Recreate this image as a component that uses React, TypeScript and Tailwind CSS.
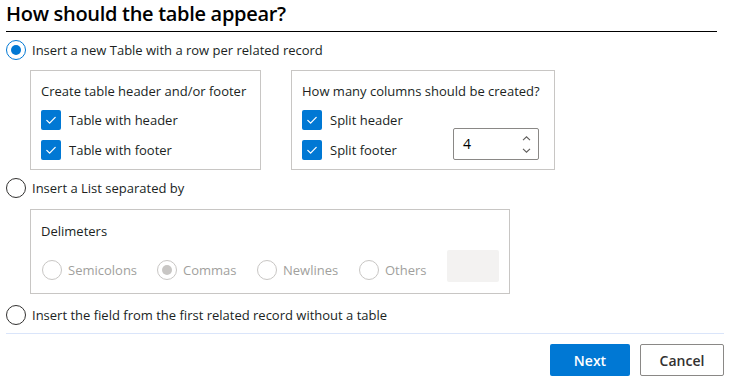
import React from "react";

function Radio({ checked = false, disabled = false }: { checked?: boolean; disabled?: boolean }) {
  const border = disabled ? "border-[#c8c6c4]" : checked ? "border-[#0078d4]" : "border-[#323130]";
  const dot = disabled ? "bg-[#c8c6c4]" : "bg-[#0078d4]";
  return (
    <span className={`flex h-[20px] w-[20px] shrink-0 items-center justify-center rounded-full border ${border} bg-white`}>
      {checked && <span className={`h-[10px] w-[10px] rounded-full ${dot}`} />}
    </span>
  );
}

function Check() {
  return (
    <span className="flex h-[20px] w-[20px] shrink-0 items-center justify-center rounded-[2px] bg-[#0078d4]">
      <svg width="20" height="20" viewBox="0 0 20 20" fill="none">
        <path d="M5.8 10.4 L8.6 13.1 L14.2 7.4" stroke="white" strokeWidth="1.3" strokeLinecap="round" strokeLinejoin="round" />
      </svg>
    </span>
  );
}

function CheckRow({ label }: { label: string }) {
  return (
    <div className="flex h-[20px] items-center gap-[8px]">
      <Check />
      <span className="whitespace-nowrap leading-[20px]">{label}</span>
    </div>
  );
}

function DisabledOption({ label, checked = false, w }: { label: string; checked?: boolean; w: string }) {
  return (
    <div className={`mt-[10px] flex h-[20px] items-center gap-[6px] ${w}`}>
      <Radio disabled checked={checked} />
      <span className="leading-[20px] text-[#a19f9d]">{label}</span>
    </div>
  );
}

export default function App() {
  return (
    <div className="flex h-[380px] w-[730px] flex-col bg-white px-[6px] text-[13px] text-[#201f1e]" style={{ fontFamily: '"Open Sans", "Noto Sans", sans-serif' }}>
      <div className="mr-[7px] h-[32px] shrink-0 border-b border-black text-[20px] font-semibold leading-[28px] tracking-[-0.3px] text-black">
        How should the table appear?
      </div>

      <div className="mt-[8px] flex h-[20px] items-center gap-[6px]">
        <Radio checked />
        <span className="leading-[20px]">Insert a new Table with a row per related record</span>
      </div>

      <div className="ml-[24px] mt-[10px] flex gap-[30px]">
        <div className="flex h-[100px] w-[231px] flex-col border border-[#c8c6c4] pl-[10px] pt-[10px]">
          <div className="h-[20px] whitespace-nowrap leading-[20px]">Create table header and/or footer</div>
          <div className="mt-[9px]">
            <CheckRow label="Table with header" />
          </div>
          <div className="mt-[10px]">
            <CheckRow label="Table with footer" />
          </div>
        </div>
        <div className="flex h-[100px] w-[264px] flex-col border border-[#c8c6c4] pl-[10px] pr-[15px] pt-[10px]">
          <div className="h-[20px] whitespace-nowrap leading-[20px]">How many columns should be created?</div>
          <div className="mt-[9px] flex items-end">
            <div className="flex flex-col">
              <CheckRow label="Split header" />
              <div className="mt-[10px]">
                <CheckRow label="Split footer" />
              </div>
            </div>
            <div className="ml-auto flex h-[32px] w-[86px] items-center justify-between rounded-[2px] border border-[#8a8886] pl-[9px] pr-[7px]">
              <span className="text-[14px] leading-[20px] text-black">4</span>
              <div className="flex flex-col items-center gap-[7px]">
                <svg width="9" height="5" viewBox="0 0 9 5" fill="none">
                  <path d="M1 4.2 L4.5 0.8 L8 4.2" stroke="#605e5c" strokeWidth="1.1" />
                </svg>
                <svg width="9" height="5" viewBox="0 0 9 5" fill="none">
                  <path d="M1 0.8 L4.5 4.2 L8 0.8" stroke="#605e5c" strokeWidth="1.1" />
                </svg>
              </div>
            </div>
          </div>
        </div>
      </div>

      <div className="mt-[8px] flex h-[20px] items-center gap-[6px]">
        <Radio />
        <span className="leading-[20px]">Insert a List separated by</span>
      </div>

      <div className="ml-[24px] mt-[11px] flex h-[85px] w-[480px] flex-col border border-[#c8c6c4] pl-[11px] pt-[11px]">
        <div className="-ml-[1px] h-[20px] leading-[20px]">Delimeters</div>
        <div className="mt-[9px] flex items-start">
          <DisabledOption label="Semicolons" w="w-[115px]" />
          <DisabledOption label="Commas" checked w="w-[100px]" />
          <DisabledOption label="Newlines" w="w-[102px]" />
          <DisabledOption label="Others" w="w-[88px]" />
          <div className="h-[32px] w-[52px] rounded-[2px] bg-[#f3f2f1]" />
        </div>
      </div>

      <div className="mt-[11px] flex h-[20px] items-center gap-[6px]">
        <Radio />
        <span className="leading-[20px]">Insert the field from the first related record without a table</span>
      </div>

      <div className="mt-[8px] h-px bg-[#dae5fa]" />

      <div className="mt-[10px] flex justify-end gap-[10px]">
        <button className="h-[32px] w-[80px] rounded-[2px] bg-[#0078d4] text-[14px] font-semibold text-white">Next</button>
        <button className="h-[32px] w-[84px] rounded-[2px] border border-[#8a8886] bg-white text-[14px] font-semibold text-[#323130]">Cancel</button>
      </div>
    </div>
  );
}
